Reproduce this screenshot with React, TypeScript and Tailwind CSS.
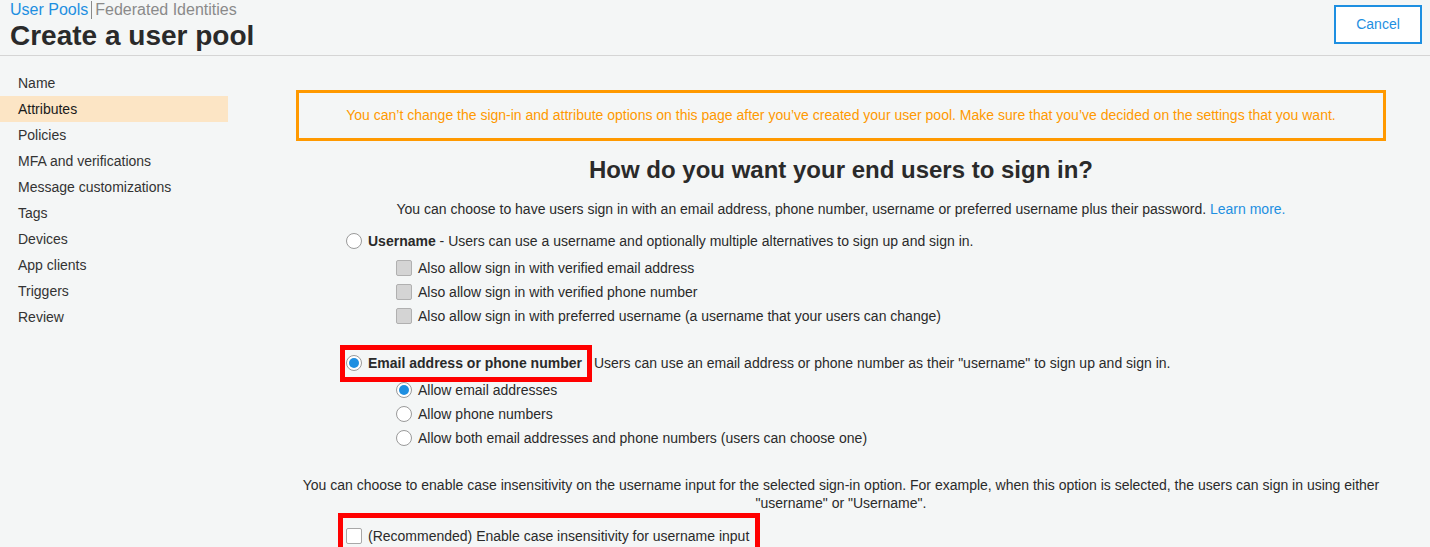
import React from "react";

const nav = [
  "Name",
  "Attributes",
  "Policies",
  "MFA and verifications",
  "Message customizations",
  "Tags",
  "Devices",
  "App clients",
  "Triggers",
  "Review",
];

function Radio({ checked = false }: { checked?: boolean }) {
  return (
    <span className="flex h-[16px] w-[16px] shrink-0 items-center justify-center rounded-full border border-[#9a9a9a] bg-white">
      {checked ? <span className="h-[10px] w-[10px] rounded-full bg-[#1e8fe1]" /> : null}
    </span>
  );
}

function Checkbox({ disabled = false }: { disabled?: boolean }) {
  return (
    <span
      className={
        disabled
          ? "h-[16px] w-[16px] shrink-0 rounded-[2px] border border-[#b0b0b0] bg-[#d4d4d4]"
          : "h-[16px] w-[16px] shrink-0 rounded-[2px] border border-[#a8a8a8] bg-white"
      }
    />
  );
}

export default function App() {
  return (
    <div
      className="min-h-[547px] w-full bg-[#f4f6f6] text-[14px] text-[#2a2a2a]"
      style={{ fontFamily: '"Liberation Sans", Arial, sans-serif' }}
    >
      <header className="flex h-[56px] items-start justify-between border-b border-[#d5d5d5] pl-[10px] pr-[8px]">
        <div>
          <div className="flex items-center text-[16px] leading-[19px]">
            <span className="text-[#1e8fe1]">User Pools</span>
            <span className="mx-[3px] h-[18px] w-px bg-[#8a8a8a]" />
            <span className="text-[#8a8a8a]">Federated Identities</span>
          </div>
          <h1 className="mt-[1px] text-[28px] font-bold leading-[32px] text-[#2a2a2a]">Create a user pool</h1>
        </div>
        <button className="mt-[5px] h-[39px] w-[88px] border-2 border-[#1e8fe1] bg-white text-[14px] text-[#1e8fe1]">
          Cancel
        </button>
      </header>

      <div className="flex">
        <nav className="w-[228px] shrink-0 pt-[14px]">
          {nav.map((item) => (
            <div
              key={item}
              className={
                item === "Attributes"
                  ? "h-[26px] bg-[#fce5c5] pl-[18px] leading-[26px] text-[#1a1a1a]"
                  : "h-[26px] pl-[18px] leading-[26px] text-[#333]"
              }
            >
              {item}
            </div>
          ))}
        </nav>

        <main className="ml-[68px] w-[1090px] pt-[34px]">
          <div className="flex h-[51px] items-center justify-center border-[3px] border-[#ff9900] text-[#ff9900]">
            You can’t change the sign-in and attribute options on this page after you’ve created your user pool. Make sure that you’ve decided on the settings that you want.
          </div>

          <h2 className="mt-[15px] text-center text-[24px] font-bold leading-[28px] text-[#2a2a2a]">
            How do you want your end users to sign in?
          </h2>

          <p className="mt-[14px] text-center leading-[22px]">
            You can choose to have users sign in with an email address, phone number, username or preferred username plus their password.{" "}
            <span className="text-[#1e8fe1]">Learn more.</span>
          </p>

          <div className="ml-[50px] mt-[9px]">
            <div className="flex h-[24px] items-center gap-[6px]">
              <Radio />
              <span>
                <b>Username</b> - Users can use a username and optionally multiple alternatives to sign up and sign in.
              </span>
            </div>
            <div className="ml-[50px] mt-[3px]">
              {[
                "Also allow sign in with verified email address",
                "Also allow sign in with verified phone number",
                "Also allow sign in with preferred username (a username that your users can change)",
              ].map((t) => (
                <div key={t} className="flex h-[24px] items-center gap-[6px]">
                  <Checkbox disabled />
                  <span>{t}</span>
                </div>
              ))}
            </div>

            <div className="mt-[23px] flex h-[24px] items-center">
              <div className="-my-[6px] -ml-[6px] flex items-center gap-[6px] border-[5px] border-[#ff0000] py-[3px] pl-[1px] pr-[5px]">
                <Radio checked />
                <b>Email address or phone number</b>
              </div>
              <span className="ml-[2px]">
                Users can use an email address or phone number as their "username" to sign up and sign in.
              </span>
            </div>
            <div className="ml-[50px] mt-[3px]">
              <div className="flex h-[24px] items-center gap-[6px]">
                <Radio checked />
                <span>Allow email addresses</span>
              </div>
              <div className="flex h-[24px] items-center gap-[6px]">
                <Radio />
                <span>Allow phone numbers</span>
              </div>
              <div className="flex h-[24px] items-center gap-[6px]">
                <Radio />
                <span>Allow both email addresses and phone numbers (users can choose one)</span>
              </div>
            </div>
          </div>

          <p className="mt-[26px] text-center leading-[18px]">
            You can choose to enable case insensitivity on the username input for the selected sign-in option. For example, when this option is selected, the users can sign in using either
            <br />
            "username" or "Username".
          </p>

          <div className="ml-[42px] mt-[1px] inline-flex h-[40px] items-start gap-[6px] border-[5px] border-b-0 border-[#ff0000] pl-[3px] pr-[6px] pt-[10px]">
            <Checkbox />
            <span className="leading-[17px]">(Recommended) Enable case insensitivity for username input</span>
          </div>
        </main>
      </div>
    </div>
  );
}
